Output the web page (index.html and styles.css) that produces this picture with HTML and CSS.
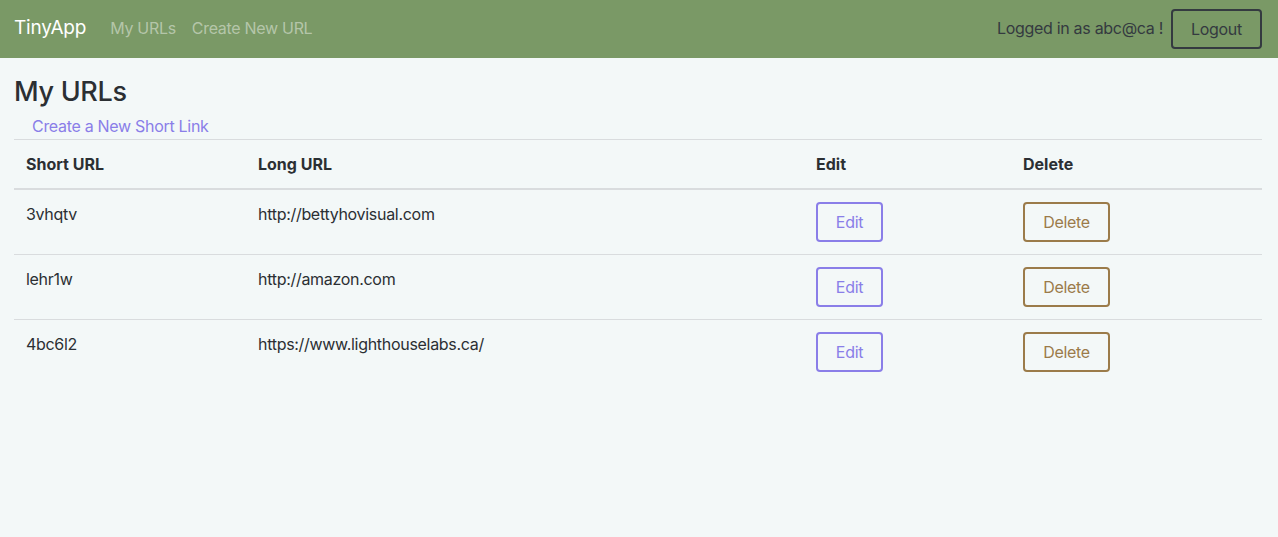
FILE: index.html
```html
<!DOCTYPE html>
<html>
<head>
<meta charset="utf-8">
<link rel="stylesheet" href="styles.css">
</head>
<body>
<nav class="navbar">
  <div class="nav-left">
    <a class="brand" href="#">TinyApp</a>
    <a class="nav-link" href="#">My URLs</a>
    <a class="nav-link" href="#">Create New URL</a>
  </div>
  <div class="nav-right">
    <span class="user">Logged in as abc@ca !</span>
    <button class="btn btn-logout">Logout</button>
  </div>
</nav>
<main class="main">
  <h3 class="title">My URLs</h3>
  <a class="create-link" href="#">Create a New Short Link</a>
  <table class="table">
    <thead>
      <tr>
        <th class="c1">Short URL</th>
        <th class="c2">Long URL</th>
        <th class="c3">Edit</th>
        <th class="c4">Delete</th>
      </tr>
    </thead>
    <tbody>
      <tr>
        <td>3vhqtv</td>
        <td>http://bettyhovisual.com</td>
        <td><button class="btn btn-edit">Edit</button></td>
        <td><button class="btn btn-delete">Delete</button></td>
      </tr>
      <tr>
        <td>lehr1w</td>
        <td>http://amazon.com</td>
        <td><button class="btn btn-edit">Edit</button></td>
        <td><button class="btn btn-delete">Delete</button></td>
      </tr>
      <tr>
        <td>4bc6l2</td>
        <td>https://www.lighthouselabs.ca/</td>
        <td><button class="btn btn-edit">Edit</button></td>
        <td><button class="btn btn-delete">Delete</button></td>
      </tr>
    </tbody>
  </table>
</main>
</body>
</html>
```

FILE: styles.css
```css
* { box-sizing: border-box; }
html, body { margin: 0; padding: 0; }
body {
  background: #f3f8f8;
  color: #2b2f33;
  font-family: "Inter", "Liberation Sans", sans-serif;
  font-size: 16px;
  line-height: 1.5;
  letter-spacing: -0.3px;
  height: 537px;
}
a { text-decoration: none; }
.navbar {
  height: 58px;
  background: #7a9966;
  display: flex;
  align-items: center;
  justify-content: space-between;
  padding: 0 16px 0 14px;
}
.nav-left { display: flex; align-items: center; padding-bottom: 2px; }
.brand {
  color: #fff;
  font-size: 19px;
  letter-spacing: -0.2px;
  margin-right: 24px;
}
.nav-link {
  color: rgba(255,255,255,0.45);
  font-size: 16px;
  margin-right: 16px;
}
.nav-right { display: flex; align-items: center; padding-bottom: 1px; }
.user { color: #343a40; margin-right: 8px; font-size: 16px; padding-bottom: 1px; }
.btn {
  font-family: inherit;
  font-size: 16px;
  line-height: 1.5;
  letter-spacing: -0.3px;
  background: transparent;
  border: 2px solid;
  border-radius: 4px;
  cursor: pointer;
  padding: 0;
}
.btn-logout {
  width: 91px;
  height: 40px;
  color: #343a40;
  border-color: #343a40;
}
.main { padding: 0 16px 0 14px; }
.title {
  margin: 0;
  padding-top: 18px;
  font-size: 27px;
  font-weight: 500;
  line-height: 1.2;
  color: #2b2f33;
}
.create-link {
  display: inline-block;
  margin-left: 18px;
  margin-top: 7px;
  margin-bottom: 2px;
  color: #8a7ee8;
  line-height: 22px;
}
.table {
  width: 1248px;
  border-collapse: collapse;
  margin-top: 0;
}
.table th, .table td {
  text-align: left;
  vertical-align: top;
  padding: 12px;
  border-top: 1px solid #d9dcde;
}
.table th {
  font-weight: 700;
  letter-spacing: 0;
  padding-top: 12px;
  padding-bottom: 12px;
  border-bottom: 2px solid #d9dcde;
  color: #2b2f33;
}
.table tbody tr:first-child td { border-top: none; }
.table td { height: 65px; padding-top: 12px; }
.c1 { width: 232px; }
.c2 { width: 558px; }
.c3 { width: 207px; }
.c4 { width: 251px; }
.btn-edit {
  width: 67px;
  height: 40px;
  color: #8a7ee8;
  border-color: #8a7ee8;
}
.btn-delete {
  width: 87px;
  height: 40px;
  color: #9b7b4a;
  border-color: #9b7b4a;
}
```
